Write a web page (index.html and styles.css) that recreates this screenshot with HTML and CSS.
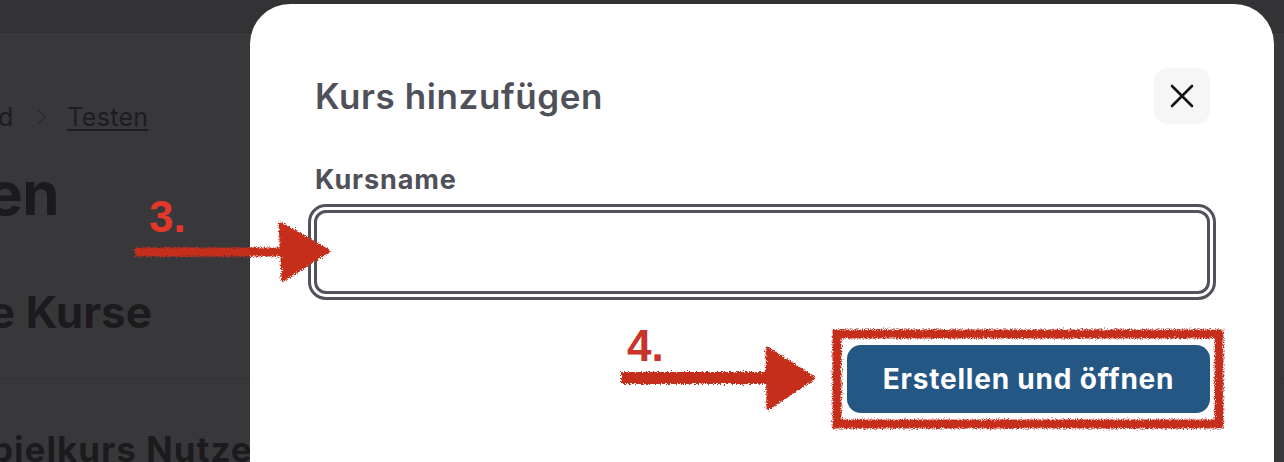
FILE: index.html
```html
<!DOCTYPE html>
<html lang="de">
<head>
<meta charset="utf-8">
<title>Kurs hinzufügen</title>
<link rel="stylesheet" href="styles.css">
</head>
<body>
  <div class="page">
    <header class="topbar"></header>
    <main class="content">
      <nav class="crumbs">
        <span class="crumb">d</span>
        <svg class="chev" width="12" height="18" viewBox="0 0 12 18"><path d="M3 2l7 7-7 7" fill="none" stroke="#2c2c2f" stroke-width="1.6"/></svg>
        <a class="crumb-link">Testen</a>
      </nav>
      <h1 class="page-title">en</h1>
      <h2 class="page-sub">e Kurse</h2>
    </main>
    <section class="list">
      <h3 class="list-item">pielkurs Nutze</h3>
    </section>
  </div>

  <div class="modal">
    <div class="modal-head">
      <h2 class="modal-title">Kurs hinzufügen</h2>
      <button class="close" aria-label="Schließen">
        <svg width="24" height="24" viewBox="0 0 24 24"><path d="M2 2L22 22M22 2L2 22" stroke="#111" stroke-width="2.6" stroke-linecap="round"/></svg>
      </button>
    </div>
    <label class="field-label">Kursname</label>
    <input class="field" type="text">
    <div class="actions">
      <button class="primary">Erstellen und öffnen</button>
    </div>
  </div>

  <svg class="annot" width="1284" height="462" viewBox="0 0 1284 462">
    <defs>
      <filter id="rough" x="-20%" y="-20%" width="140%" height="140%">
        <feTurbulence type="fractalNoise" baseFrequency="0.85" numOctaves="2" seed="4" result="n"/>
        <feDisplacementMap in="SourceGraphic" in2="n" scale="6" xChannelSelector="R" yChannelSelector="G"/>
      </filter>
    </defs>
    <g filter="url(#rough)" fill="#c62f1e" stroke="#c62f1e">
      <line x1="135" y1="252" x2="290" y2="252" stroke-width="9"/>
      <polygon points="280,223 329,251 283,280" stroke-width="3" stroke-linejoin="round"/>
      <line x1="621" y1="378" x2="775" y2="378" stroke-width="12"/>
      <polygon points="767,348 814,378 768,409" stroke-width="3" stroke-linejoin="round"/>
      <rect x="837" y="334" width="382" height="90" fill="none" stroke-width="9"/>
    </g>
    <text class="num num3" x="149" y="232">3.</text>
    <text class="num num4" x="627" y="361">4.</text>
  </svg>
</body>
</html>
```

FILE: styles.css
```css
html, body {
  margin: 0;
  padding: 0;
}
body {
  width: 1284px;
  height: 462px;
  overflow: hidden;
  position: relative;
  background: #38383a;
  font-family: Inter, "Noto Sans", "Liberation Sans", sans-serif;
}
.page {
  width: 1284px;
  height: 462px;
  display: flex;
  flex-direction: column;
}
.topbar {
  height: 32px;
  background: #333335;
  border-bottom: 1px solid #2f2f31;
  flex: none;
}
.content {
  padding-top: 68px;
  height: 345px;
  box-sizing: border-box;
  flex: none;
}
.crumbs {
  display: flex;
  align-items: center;
  height: 32px;
  font-size: 25px;
  line-height: 32px;
  color: #1d1d20;
}
.crumb {
  margin-left: -2px;
}
.chev {
  margin: 0 20px 0 22px;
}
.crumb-link {
  color: #1d1d20;
  text-decoration: underline;
  text-underline-offset: 3px;
  text-decoration-thickness: 1.5px;
  letter-spacing: 0.3px;
}
.page-title {
  margin: 24px 0 0 -13px;
  font-size: 60px;
  line-height: 72px;
  font-weight: 700;
  color: #1b1b1e;
  letter-spacing: -0.5px;
}
.page-sub {
  margin: 57px 0 0 -11px;
  font-size: 44px;
  line-height: 52px;
  font-weight: 700;
  color: #1b1b1e;
}
.list {
  border-top: 1px solid #333335;
  padding-top: 50px;
  flex: 1;
  background: #38383a;
}
.list-item {
  margin: 0 0 0 -9px;
  font-size: 35px;
  line-height: 40px;
  font-weight: 700;
  color: #1b1b1e;
  white-space: nowrap;
  letter-spacing: 1px;
}

.modal {
  position: absolute;
  left: 250px;
  top: 4px;
  width: 1024px;
  height: 520px;
  box-sizing: border-box;
  background: #ffffff;
  border-radius: 40px;
  padding: 64px 64px 0 64px;
  display: flex;
  flex-direction: column;
}
.modal-head {
  display: flex;
  align-items: center;
  justify-content: space-between;
  height: 56px;
}
.modal-title {
  margin: 0 0 0 1px;
  font-size: 35px;
  line-height: 40px;
  font-weight: 600;
  color: #50505a;
  letter-spacing: 0.6px;
}
.close {
  width: 56px;
  height: 56px;
  border: none;
  border-radius: 14px;
  background: #f6f6f6;
  display: flex;
  align-items: center;
  justify-content: center;
  padding: 0;
}
.field-label {
  margin: 40px 0 0 1px;
  font-size: 27px;
  line-height: 32px;
  font-weight: 650;
  color: #50505a;
  letter-spacing: 0.9px;
}
.field {
  margin-top: 14px;
  height: 84px;
  box-sizing: border-box;
  border: 3px solid #52525c;
  border-radius: 12px;
  outline: 3px solid #52525c;
  outline-offset: 3px;
  background: #fff;
  font: inherit;
}
.actions {
  display: flex;
  justify-content: flex-end;
  margin-top: 51px;
}
.primary {
  width: 363px;
  height: 68px;
  border: none;
  border-radius: 14px;
  background: #255785;
  color: #ffffff;
  font-family: Inter, "Noto Sans", "Liberation Sans", sans-serif;
  font-size: 28px;
  font-weight: 700;
  letter-spacing: 0.8px;
  padding: 0;
}

.annot {
  position: absolute;
  left: 0;
  top: 0;
  pointer-events: none;
}
.num {
  font-family: "Liberation Sans", Arial, sans-serif;
  font-weight: 700;
  font-size: 44px;
}
.num3 { fill: #e2372a; }
.num4 { fill: #c8332a; }
```
